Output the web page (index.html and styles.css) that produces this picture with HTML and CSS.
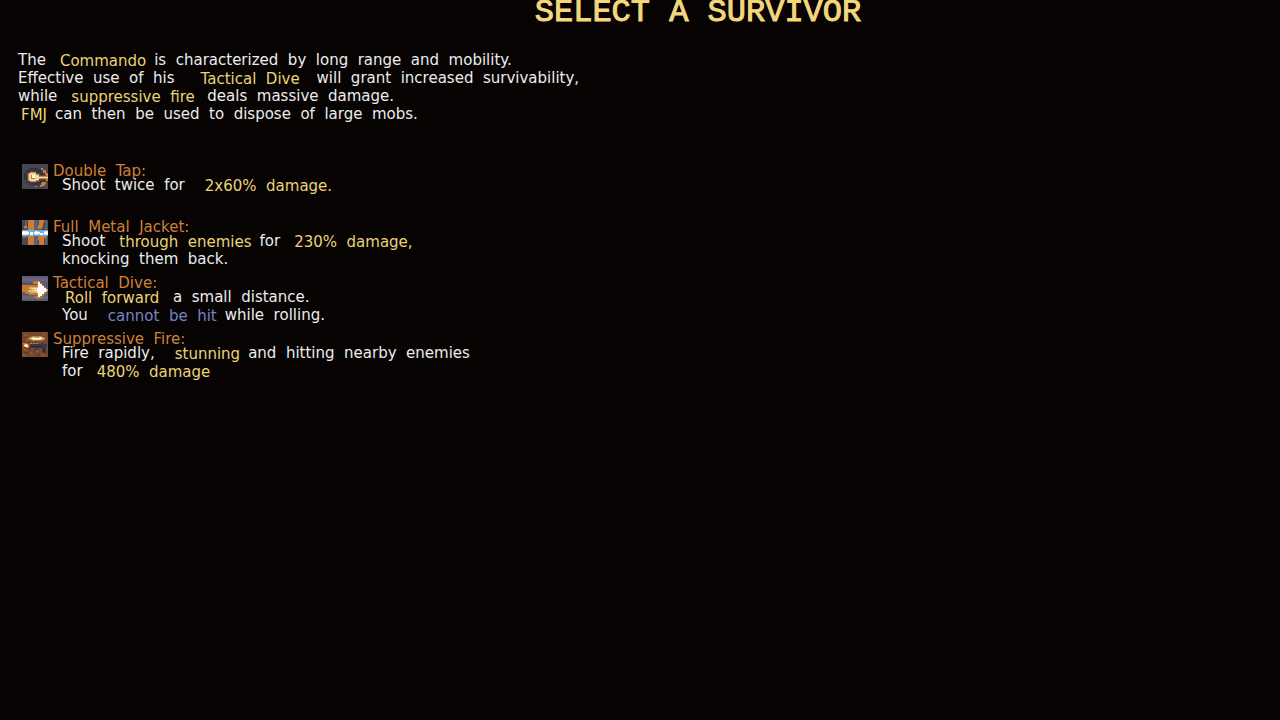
FILE: index.html
```html
<!DOCTYPE html>
<html lang="en">
<head>
<meta charset="utf-8">
<meta name="viewport" content="width=device-width, initial-scale=1">
<title>Select a Survivor</title>
<link rel="stylesheet" href="styles.css">
</head>
<body>
<main class="screen">
  <h1 class="title">SELECT A SURVIVOR</h1>
  <section class="intro">
    <p class="line">The<em class="hl w-s">Commando</em>is  characterized  by  long  range  and  mobility.</p>
    <p class="line">Effective  use  of  his<em class="hl wide w-m">Tactical  Dive</em>will  grant  increased  survivability,</p>
    <p class="line">while<em class="hl w-l">suppressive  fire</em>deals  massive  damage.</p>
    <p class="line"><em class="hl first">FMJ</em>can  then  be  used  to  dispose  of  large  mobs.</p>
  </section>
  <ul class="skills">
    <li class="skill">
      <svg class="icon" viewBox="0 0 26 25" shape-rendering="crispEdges" aria-hidden="true">
        <path fill="#464550" d="M0 0h26v25H0z"/>
        <path fill="#35333f" d="M7 4h9v1h4v3h3v9h-3v4H7v-2H4v-3H2V9h2V6h3z"/>
        <path fill="#504b50" d="M8 7h6v2h4v2h8v5h-8v2h-4v1H8v-2H5V9h3z"/>
        <path fill="#c18b52" d="M8 8h6v2h3v2h9v3h-9v2h-3v1H8v-1H6V9h2z"/>
        <path fill="#f1d99a" d="M8 9h6v2h3v2h9v1h-9v2h-3v1H8v-1H7v-6h1z"/>
        <path fill="#c87536" d="M9 11h4v4H9z"/><path fill="#fff6e2" d="M10 11h3v3h-3z"/>
        <path fill="#c97b39" d="M19 4h2v2h-2zM21 6h3v3h-3zM23 9h3v3h-2v-1h-1zM24 15h2v2h-2zM20 18h4v2h-1v2h-3v-1h-1v-2h1zM18 21h2v2h-2zM13 22h2v1h-2z"/>
      </svg>
      <div class="text">
        <h2 class="name">Double  Tap:</h2>
        <p class="line">Shoot  twice  for<em class="hl mid">2x60%  damage.</em></p>
      </div>
    </li>
    <li class="skill">
      <svg class="icon" viewBox="0 0 26 25" shape-rendering="crispEdges" aria-hidden="true">
        <path fill="#4b4956" d="M0 0h26v25H0z"/>
        <path fill="#625d70" d="M3 0h2v10H3zM12 0h4v25h-4zM23 0h2v25h-2zM0 15h6v3H0z"/>
        <path fill="#ca7d35" d="M6 0h6v25H6V15H5v-3h1zM17 0h5v3h-1v4h-1v2h-4V5h1zM16 16h6v9h-5v-5h-1zM2 6h3v2H2zM1 15h3v2H1zM22 16h2v2h-2z"/>
        <path fill="#8999d0" d="M0 10h26v6H0z"/>
        <path fill="#dbeafa" d="M0 11h26v4H0z"/>
        <path fill="#68b7df" d="M6 10h5v1h2v4h-2v1H6zM16 10h4v1h2v5h-5v-1h-1z"/>
        <path fill="#fff" d="M0 12h7v2H0zM8 12h3v3H8zM12 12h6v1h3v2h-3v-1h-6zM22 12h4v2h-4z"/>
      </svg>
      <div class="text">
        <h2 class="name">Full  Metal  Jacket:</h2>
        <p class="line">Shoot<em class="hl w-l">through  enemies</em>for<em class="hl">230%  damage,</em></p>
        <p class="line">knocking  them  back.</p>
      </div>
    </li>
    <li class="skill">
      <svg class="icon" viewBox="0 0 26 25" shape-rendering="crispEdges" aria-hidden="true">
        <path fill="#5d5c72" d="M0 0h26v25H0z"/>
        <path fill="#68677d" d="M0 2h26v3H0zM0 20h26v3H0z"/>
        <path fill="#504f64" d="M0 7h15v2H0zM2 17h13v2H2z"/>
        <path fill="#c9782e" d="M11 5h4v3h-4zM0 9h15V5h3v2h2v2h2v2h2v2h2v3h-2v2h-2v2h-2v2h-2v1h-3v-4H7v-1H3v-2H0zM13 20h2v2h-2z"/>
        <path fill="#dcb66f" d="M7 11h10v6H8v-1H6v-2h3v-1H7z"/>
        <path fill="#f2dfa4" d="M10 12h8v3h-7v-1h2v-1h-3z"/>
        <path fill="#fff" d="M16 6h2v2h2v2h2v2h2v1h1v2h-1v1h-2v2h-2v2h-2v1h-2v-4h-1v-5h1z"/>
      </svg>
      <div class="text">
        <h2 class="name">Tactical  Dive:</h2>
        <p class="line"><em class="hl first w-r">Roll  forward</em>a  small  distance.</p>
        <p class="line">You<em class="hl mid safe">cannot  be  hit</em>while  rolling.</p>
      </div>
    </li>
    <li class="skill">
      <svg class="icon" viewBox="0 0 26 25" shape-rendering="crispEdges" aria-hidden="true">
        <path fill="#76472a" d="M0 0h26v25H0z"/>
        <path fill="#8a5630" d="M2 2h3v2H2zM21 1h3v3h-3zM3 7h3v2H3zM2 17h4v2H2zM8 20h3v3H8zM14 17h3v3h-3zM1 22h3v2H1zM19 22h4v2h-4z"/>
        <path fill="#633c28" d="M0 9h4v1H0zM5 15h4v3H5zM11 18h2v3h-2zM3 20h3v2H3zM15 22h3v2h-3z"/>
        <path fill="#b87a45" d="M9 4h11v1h2v1h1v2h-2v1H9V8H6V6h1V5h2z"/>
        <path fill="#ead7aa" d="M10 5h10v1h2v1h-3v1h-9V7H8V6h2z"/>
        <path fill="#fff" d="M11 6h8v1h-8z"/><path fill="#c79066" d="M13 5h4v1h-4z"/>
        <path fill="#343846" d="M8 12h11v-1h3v1h3v3h-1v6h-3v-1h-1v-4h-3v2h-4v-2H8z"/>
        <path fill="#262b3a" d="M9 14h11v1H9zM22 16h1v4h-1z"/>
        <path fill="#76472a" d="M14 16h2v1h-2z"/>
        <path fill="#d37932" d="M8 11h2v1H8zM11 11h2v1h-2zM14 11h2v1h-2zM1 11h4v1h2v4H4v-1H1v-1h1v-1H1z"/>
        <path fill="#fff0d0" d="M3 12h2v1h1v2H3v-1H2v-1h1z"/>
      </svg>
      <div class="text">
        <h2 class="name">Suppressive  Fire:</h2>
        <p class="line">Fire  rapidly,<em class="hl mid">stunning</em>and  hitting  nearby  enemies</p>
        <p class="line">for<em class="hl">480%  damage</em></p>
      </div>
    </li>
  </ul>
</main>
</body>
</html>
```
FILE: styles.css
```css
* { box-sizing: border-box; }
body {
  margin: 0;
  min-height: 100vh;
  background: #070303;
  color: #ececec;
  font-family: "DejaVu Sans", sans-serif;
  font-size: 15px;
  line-height: 18px;
}
.title {
  margin: 0;
  padding-left: 116px;
  color: #f4d77c;
  font: 400 32px/26px "Liberation Mono", monospace;
  text-align: center;
  -webkit-text-stroke: 1px #f4d77c;
}
.intro { padding: 25px 18px 0; }
.line { margin: 0; white-space: pre-wrap; }
.hl {
  display: inline-block;
  margin: 0 8px 0 14px;
  color: #ead474;
  font-style: normal;
  line-height: 16px;
  vertical-align: -1px;
}
.mid { margin-left: 20px; }
.wide { margin-left: 26px; }
.first { margin-left: 3px; }
.safe { color: #7583c6; }
.w-s { min-width: 80px; }
.w-r { min-width: 100px; }
.w-m { min-width: 108px; }
.w-l { min-width: 128px; }
.skills {
  display: grid;
  gap: 6px;
  margin: 0;
  padding: 41px 22px 0;
  list-style: none;
}
.skill {
  display: flex;
  gap: 5px;
  min-height: 50px;
}
.icon { flex: none; width: 26px; height: 25px; }
.name {
  margin: 0 0 -2px;
  color: #cf8038;
  font-size: 15px;
  font-weight: 400;
  line-height: 14px;
  white-space: pre-wrap;
}
.text .line { padding-left: 9px; }
```
